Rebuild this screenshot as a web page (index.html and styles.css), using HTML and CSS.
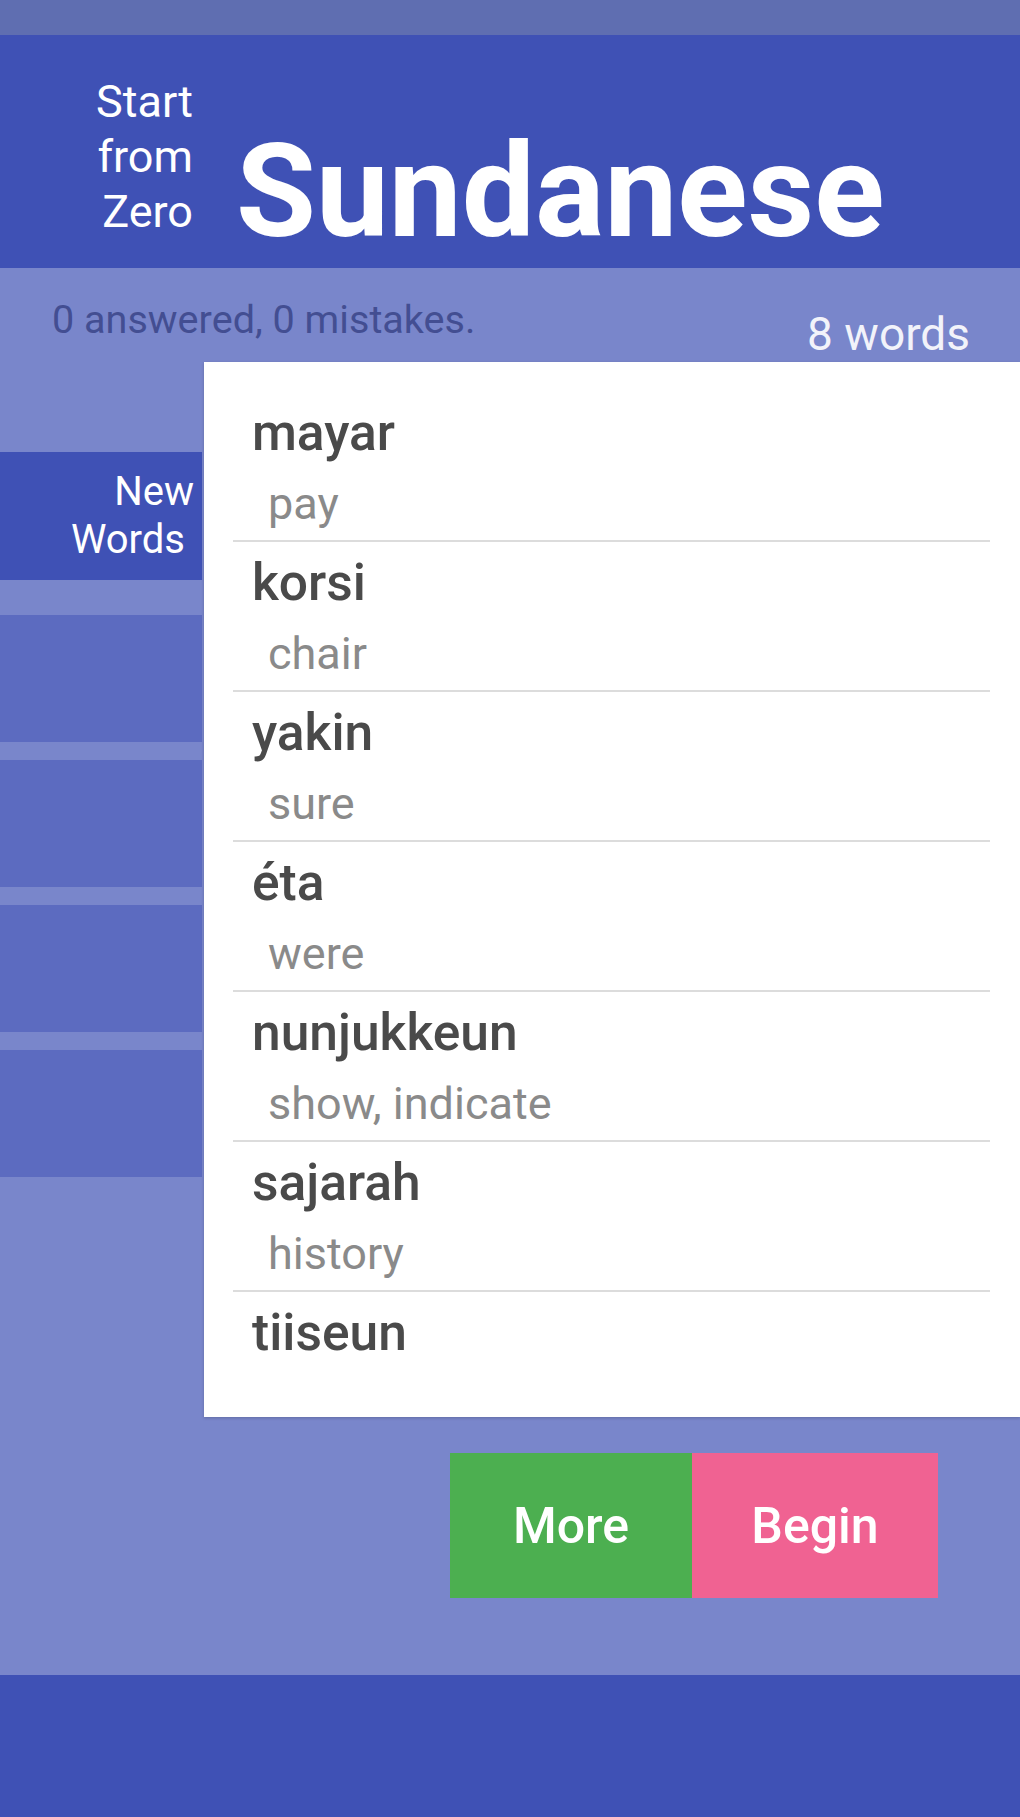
FILE: index.html
```html
<!DOCTYPE html>
<html lang="en">
<head>
<meta charset="utf-8">
<title>Start from Zero Sundanese</title>
<link rel="stylesheet" href="styles.css">
</head>
<body>
<div class="page">
  <div class="statusbar"></div>
  <header class="header">
    <div class="brand">Start<br>from<br>Zero</div>
    <h1 class="title">Sundanese</h1>
  </header>
  <main class="main">
    <div class="stats">
      <div class="answered">0 answered, 0 mistakes.</div>
      <div class="count">8 words</div>
    </div>
    <div class="content">
      <nav class="tabs">
        <div class="tab active"><span class="tab-line">New</span><span class="tab-line second">Words</span></div>
        <div class="tab"></div>
        <div class="tab"></div>
        <div class="tab"></div>
        <div class="tab"></div>
      </nav>
      <section class="card">
        <div class="row"><div class="word">mayar</div><div class="gloss">pay</div></div>
        <div class="row"><div class="word">korsi</div><div class="gloss">chair</div></div>
        <div class="row"><div class="word">yakin</div><div class="gloss">sure</div></div>
        <div class="row"><div class="word">éta</div><div class="gloss">were</div></div>
        <div class="row"><div class="word">nunjukkeun</div><div class="gloss">show, indicate</div></div>
        <div class="row"><div class="word">sajarah</div><div class="gloss">history</div></div>
        <div class="row"><div class="word">tiiseun</div></div>
      </section>
    </div>
    <div class="actions">
      <button class="btn more">More</button>
      <button class="btn begin">Begin</button>
    </div>
  </main>
  <footer class="footer"></footer>
</div>
</body>
</html>
```
FILE: styles.css
```css
html, body {
  margin: 0;
  padding: 0;
}
body {
  font-family: Roboto, "Noto Sans", "Liberation Sans", sans-serif;
  background: #3f51b5;
}
.page {
  width: 1020px;
  height: 1817px;
  display: flex;
  flex-direction: column;
  overflow: hidden;
}
.statusbar {
  height: 35px;
  background: #5f6eb1;
}
.header {
  height: 233px;
  background: #3f51b5;
  display: flex;
  align-items: flex-start;
  color: #ffffff;
}
.brand {
  width: 193px;
  margin-top: 39px;
  text-align: right;
  font-size: 45px;
  line-height: 55px;
}
.title {
  margin: 82px 0 0 43px;
  font-size: 130px;
  line-height: 150px;
  font-weight: 700;
}
.main {
  height: 1407px;
  background: #7986cb;
  display: flex;
  flex-direction: column;
}
.stats {
  height: 94px;
  display: flex;
  justify-content: space-between;
  align-items: flex-start;
  padding: 0 50px 0 52px;
}
.answered {
  margin-top: 29px;
  font-size: 39.6px;
  line-height: 46px;
  color: #434e92;
}
.count {
  margin-top: 39px;
  font-size: 46px;
  line-height: 54px;
  color: #f2f3fa;
}
.content {
  display: flex;
  height: 1055px;
}
.tabs {
  width: 204px;
  flex: none;
  padding-top: 90px;
  display: flex;
  flex-direction: column;
  gap: 18px;
}
.tab {
  width: 202px;
  height: 127px;
  background: #5c6bc0;
}
.tab.active {
  height: 128px;
  margin-bottom: 17px;
  background: #3f51b5;
  color: #ffffff;
  font-size: 40px;
  line-height: 48px;
  box-sizing: border-box;
  padding-right: 8px;
  display: flex;
  flex-direction: column;
  align-items: flex-end;
  justify-content: center;
}
.tab-line.second {
  margin-right: 9px;
}
.card {
  flex: 1;
  background: #ffffff;
  overflow: hidden;
  padding-top: 30px;
  box-shadow: 0 1px 3px rgba(0, 0, 0, 0.2);
}
.row {
  margin: 0 30px 0 29px;
  padding: 11px 0 9px 19px;
  border-top: 2px solid #dcdcdc;
}
.row:first-child {
  border-top: 0;
}
.word {
  font-size: 51.5px;
  line-height: 60px;
  font-weight: 500;
  color: #4a4a4a;
}
.gloss {
  margin-top: 14px;
  padding-left: 16px;
  font-size: 45px;
  line-height: 54px;
  color: #8a8a8a;
}
.actions {
  margin-top: 36px;
  display: flex;
  justify-content: flex-end;
  padding-right: 82px;
}
.btn {
  height: 145px;
  width: 242px;
  border: 0;
  margin: 0;
  padding: 0;
  font-family: inherit;
  font-size: 50px;
  font-weight: 500;
  color: #ffffff;
}
.btn.more {
  background: #4caf50;
}
.btn.begin {
  width: 246px;
  background: #f06292;
}
.footer {
  flex: 1;
  background: #3f51b5;
}
```
